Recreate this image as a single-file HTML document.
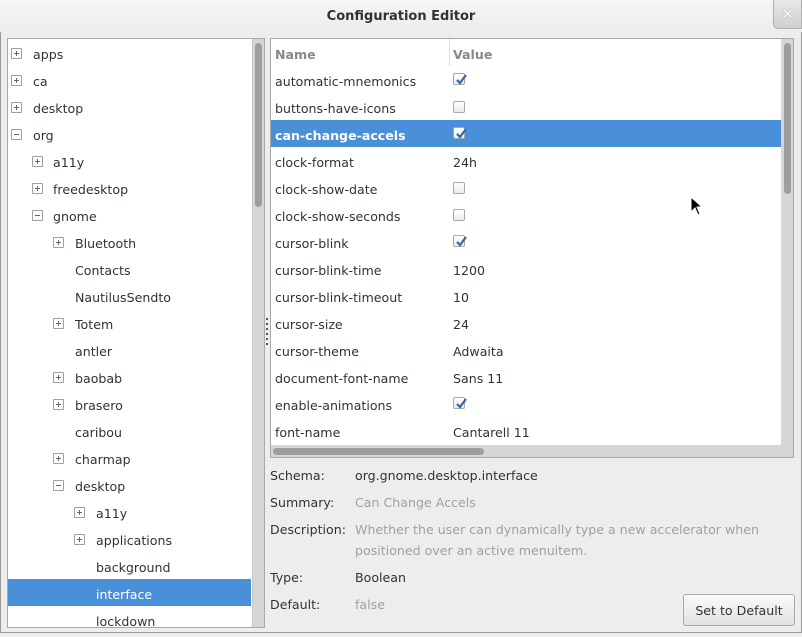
<!DOCTYPE html>
<html><head><meta charset="utf-8"><style>
*{margin:0;padding:0;box-sizing:border-box}
body{width:802px;height:633px;overflow:hidden;background:#ededed;font-family:"DejaVu Sans","Liberation Sans",sans-serif;font-size:12.6px;color:#2e3436;position:relative}
.win{position:absolute;left:0;top:0;width:802px;height:633px;border:1px solid #9a9a9a;border-radius:5px 5px 0 0;background:#ededed}
.title{position:absolute;left:0;top:0;width:802px;height:32px;background:linear-gradient(#f6f6f6,#ececec);text-align:center;line-height:33px;font-weight:bold;font-size:13px;color:#2e3436}
.close{position:absolute;left:773px;top:0;width:29px;height:29px;background:linear-gradient(#e8e8e8,#cfcfcf);border:1px solid #b0b0b0;border-top:none;border-radius:0 0 0 5px;color:#fff;font-weight:bold;text-align:center;line-height:29px;font-size:15px;text-shadow:0 0 1px #666}
.pane{position:absolute;background:#fff;border:1px solid #a8a8a8;overflow:hidden}
.r{position:absolute;height:27px;line-height:31px;white-space:nowrap}
.sel{background:#4a90d9;color:#fff}
.ex{position:absolute;width:11px;height:11px;border:1px solid #a0a0a0;border-radius:1px;background:#fff}
.ex:before{content:"";position:absolute;left:2px;top:4px;width:5px;height:1px;background:#666}
.ex.p:after{content:"";position:absolute;left:4px;top:2px;width:1px;height:5px;background:#666}
.cb{position:absolute;width:12px;height:12px;border:1px solid #a8a8a8;border-radius:2px;background:linear-gradient(#fff,#ececec)}
.cb svg{position:absolute;left:0;top:-2px}
.lbl{position:absolute;line-height:24px}
.dim{color:#a0a0a0}
</style></head><body>
<div class="win"></div>
<div class="title">Configuration Editor</div>
<div class="close">✕</div>

<div class="pane" style="left:7px;top:38px;width:258px;height:590px">
<div style="position:absolute;left:244px;top:0;width:13px;height:590px;background:#d6d6d6;border-left:1px solid #c8c8c8"></div>
<div style="position:absolute;left:247px;top:4px;width:7px;height:164px;background:#9e9e9e;border-radius:4px"></div>
</div>
<div id="tree"></div>

<div style="position:absolute;left:266px;top:318px;width:2px;height:30px;background:repeating-linear-gradient(#555 0 2px,transparent 2px 5px)"></div>

<div class="pane" style="left:270px;top:38px;width:524px;height:420px">
<div style="position:absolute;left:0;top:406px;width:524px;height:14px;background:#d6d6d6"></div>
<div style="position:absolute;left:510px;top:0;width:14px;height:420px;background:#d6d6d6"></div>
<div style="position:absolute;left:2px;top:409px;width:211px;height:7px;background:#9e9e9e;border-radius:4px"></div>
<div style="position:absolute;left:513px;top:4px;width:7px;height:151px;background:#9e9e9e;border-radius:4px"></div>
<div style="position:absolute;left:178px;top:0;width:1px;height:27px;background:#ddd"></div>
</div>
<div id="list"></div>

<div class="lbl" style="left:270px;top:464px">Schema:</div>
<div class="lbl" style="left:355px;top:464px">org.gnome.desktop.interface</div>
<div class="lbl" style="left:270px;top:491px">Summary:</div>
<div class="lbl dim" style="left:355px;top:491px">Can Change Accels</div>
<div class="lbl" style="left:270px;top:518px">Description:</div>
<div class="lbl dim" style="left:355px;top:518px">Whether the user can dynamically type a new accelerator when</div>
<div class="lbl dim" style="left:355px;top:539px">positioned over an active menuitem.</div>
<div class="lbl" style="left:270px;top:566px">Type:</div>
<div class="lbl" style="left:355px;top:566px">Boolean</div>
<div class="lbl" style="left:270px;top:593px">Default:</div>
<div class="lbl dim" style="left:355px;top:593px">false</div>
<div style="position:absolute;left:683px;top:594px;width:112px;height:32px;border:1px solid #a8a8a8;border-radius:3px;background:linear-gradient(#fafafa,#e2e2e2);text-align:center;line-height:31px">Set to Default</div>

<svg style="position:absolute;left:690px;top:196px" width="14" height="22"><path d="M1 1 L1 16 L5 12 L8 19 L10 18 L7 11 L12 11 Z" fill="#000" stroke="#fff" stroke-width="1"/></svg>

<script>
var T=[["apps",0,"p"],["ca",0,"p"],["desktop",0,"p"],["org",0,"m"],["a11y",1,"p"],["freedesktop",1,"p"],["gnome",1,"m"],["Bluetooth",2,"p"],["Contacts",2,""],["NautilusSendto",2,""],["Totem",2,"p"],["antler",2,""],["baobab",2,"p"],["brasero",2,"p"],["caribou",2,""],["charmap",2,"p"],["desktop",2,"m"],["a11y",3,"p"],["applications",3,"p"],["background",3,""],["interface",3,"",1],["lockdown",3,""]];
var h="";
T.forEach(function(t,i){var y=39+27*i;var tx=[33,53,75,96][t[1]];var ex=[11,32,53,74][t[1]];
h+='<div class="r'+(t[3]?' sel':'')+'" style="left:8px;top:'+y+'px;width:243px"></div>';
if(t[2])h+='<div class="ex '+(t[2]=="p"?"p":"")+'" style="left:'+ex+'px;top:'+(y+9)+'px"></div>';
h+='<div class="r" style="left:'+tx+'px;top:'+y+'px;'+(t[3]?'color:#fff':'')+'">'+t[0]+'</div>';});
document.getElementById("tree").innerHTML=h;
var chk='<svg width="14" height="14"><path d="M3 8 L6 11 L12 3" fill="none" stroke="#3465a4" stroke-width="2.2"/></svg>';
var L=[["automatic-mnemonics","c"],["buttons-have-icons","u"],["can-change-accels","c",1],["clock-format","24h"],["clock-show-date","u"],["clock-show-seconds","u"],["cursor-blink","c"],["cursor-blink-time","1200"],["cursor-blink-timeout","10"],["cursor-size","24"],["cursor-theme","Adwaita"],["document-font-name","Sans 11"],["enable-animations","c"],["font-name","Cantarell 11"]];
h='<div class="r" style="left:275px;top:39px;color:#888;font-weight:bold">Name</div><div class="r" style="left:453px;top:39px;color:#888;font-weight:bold">Value</div>';
L.forEach(function(t,i){var y=66+27*i;
if(t[2])h+='<div class="r sel" style="left:271px;top:'+y+'px;width:510px"></div>';
h+='<div class="r" style="left:275px;top:'+y+'px;'+(t[2]?'color:#fff;font-weight:bold':'')+'">'+t[0]+'</div>';
if(t[1]=="c")h+='<div class="cb" style="left:453px;top:'+(y+7)+'px">'+chk+'</div>';
else if(t[1]=="u")h+='<div class="cb" style="left:453px;top:'+(y+8)+'px"></div>';
else h+='<div class="r" style="left:453px;top:'+y+'px">'+t[1]+'</div>';});
document.getElementById("list").innerHTML=h;
</script>
</body></html>
